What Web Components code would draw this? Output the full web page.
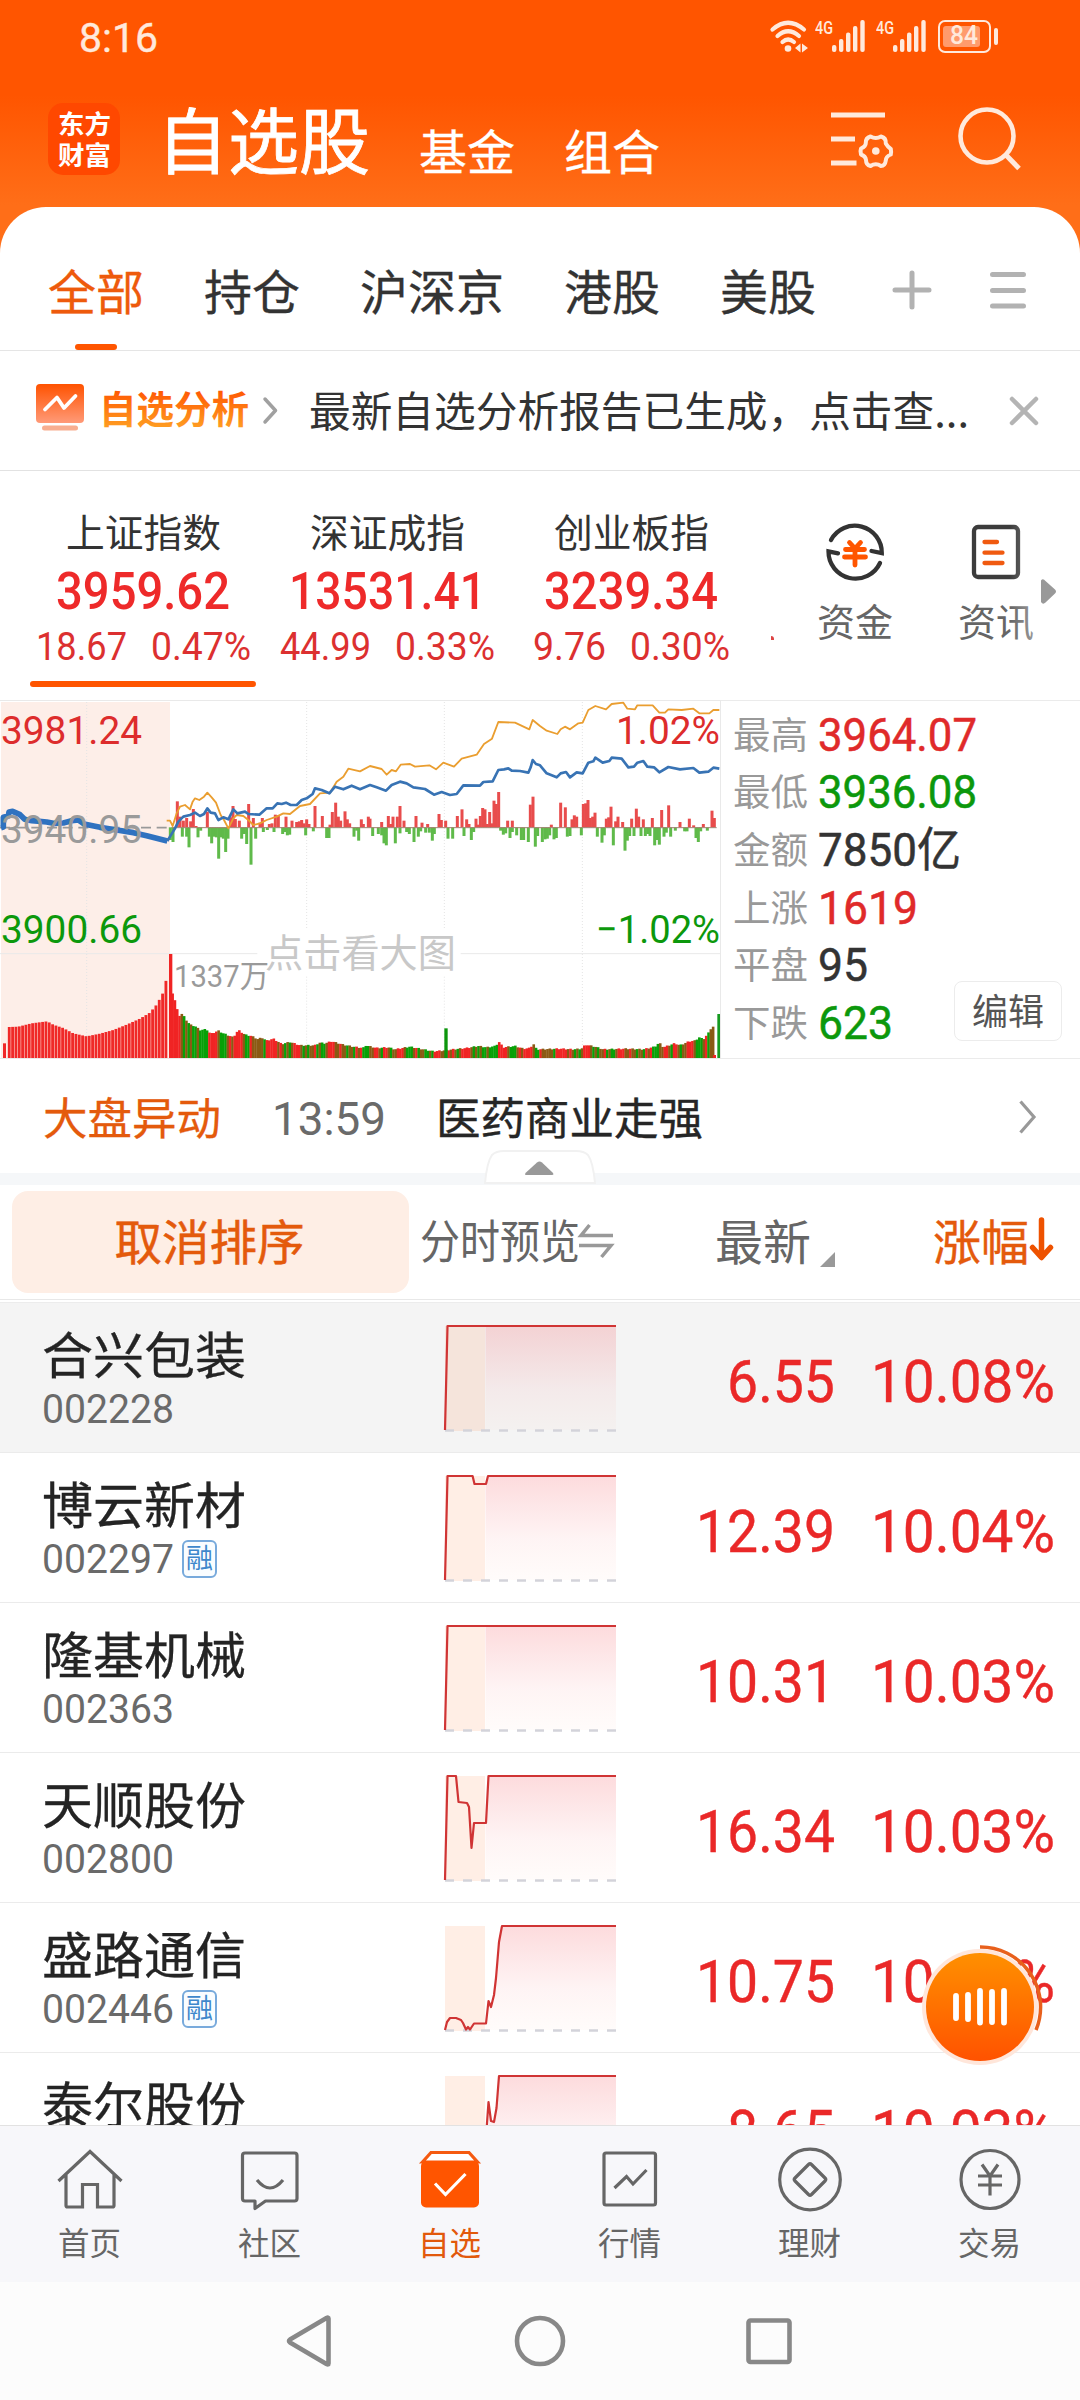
<!DOCTYPE html>
<html lang="zh-CN">
<head>
<meta charset="utf-8">
<title>自选股</title>
<style>
html,body{margin:0;padding:0}
body{width:1080px;height:2400px;overflow:hidden;background:#fff;font-family:"Noto Sans CJK SC",sans-serif;color:#333}
</style>
</head>
<body>
<watch-app></watch-app>
<script>
const define=(name,css,html,after)=>customElements.define(name,class extends HTMLElement{
  connectedCallback(){
    if(this.shadowRoot)return;
    const root=this.attachShadow({mode:'open'});
    const a=n=>this.getAttribute(n)||'';
    root.innerHTML=`<style>*{box-sizing:border-box}svg{display:block;overflow:visible}:host{display:block;box-sizing:border-box}${css}</style>${typeof html==='function'?html(a,this):html}`;
    if(after)after(this,root);
  }
});

/* One line of text set to an exact width: s = size, w = width, num = figures face */
define('fit-text',
 `:host{flex:none;white-space:nowrap;text-align:left}span{display:inline-block;transform-origin:0 50%;white-space:pre}`,
 `<span><slot></slot></span>`,
 (el,root)=>{
  const s=+el.getAttribute('s'),w=+el.getAttribute('w'),num=el.hasAttribute('num');
  const sp=root.querySelector('span');
  const lh=+el.getAttribute('lh')||Math.round(s*1.2);
  el.style.fontSize=s+'px';el.style.lineHeight=el.style.height=lh+'px';
  el.style.fontFamily=num?'Roboto,"Noto Sans CJK SC",sans-serif':'"Noto Sans CJK SC",sans-serif';
  if(el.hasAttribute('b'))el.style.fontWeight=el.getAttribute('b');
  if(el.hasAttribute('stroke'))el.style.webkitTextStroke=el.getAttribute('stroke')+'px currentColor';
  const k=w?w/sp.getBoundingClientRect().width:1;
  if(w)el.style.width=w+'px';
  sp.style.transform=`translateY(${num?0:-.056}em) scaleX(${k})`;
 });

define('signal-bars',`:host{width:51px;height:33px}div{display:flex;align-items:flex-start}svg{margin-left:-1px}`,
 `<div><fit-text num s="19" w="18" b="500" style="margin-top:-4px">4G</fit-text><svg width="34" height="33" fill="#ffe9dc"><rect x="0" y="25" width="4.4" height="7" rx="2"/><rect x="7" y="19" width="4.4" height="13" rx="2"/><rect x="14" y="12.500" width="4.400" height="19.500" rx="2"/><rect x="21" y="6" width="4.400" height="26" rx="2"/><rect x="28.300" y="0" width="4.400" height="32" rx="2"/></svg></div>`);

define('status-bar',
 `:host{height:74px;padding:20px 82px 0 79px;display:flex;justify-content:space-between;color:#ffe9dc}
 .r{display:flex;align-items:flex-start}.bat{width:53px;height:33px;border:2.5px solid #ffe9dc;border-radius:7px;margin-left:11px;padding:3.500px 3px;}
 .fill{width:37px;height:21px;background:#ff9b6d;border-radius:3px;display:flex;justify-content:center;align-items:center;padding-left:4px}
 .nub{width:4px;height:17px;border-radius:2px;background:#ffe9dc;margin:8px 0 0 3px}`,
 `<fit-text num s="41" w="79" stroke=".4" style="margin-top:-6px">8:16</fit-text>
 <div class="r"><svg width="39" height="33" fill="none" stroke="#ffe9dc" stroke-width="4.200" stroke-linecap="round"><path d="M2.500 9.500Q18 -4 34 9.500M7.500 16Q18 6.500 29 16M12.500 22Q18 17 24 22"/><circle cx="18" cy="28.500" r="3.300" fill="#ffe9dc" stroke="none"/><path d="M25 28l5.500-4.500v9zM32 32.500v-9l6 4.500z" fill="#ffe9dc" stroke="none"/></svg>
 <signal-bars style="margin-left:6px"></signal-bars><signal-bars style="margin-left:10px"></signal-bars>
 <div class="bat"><div class="fill"><fit-text num s="25" w="28" b="500">84</fit-text></div></div><div class="nub"></div></div>`);

define('app-header',
 `:host{height:133px;padding:0 0 0 48px;display:flex;align-items:flex-start;color:#fff}
 .logo{width:72px;height:72px;margin-top:29px;border-radius:15px;background:#ff4800;display:flex;flex-direction:column;align-items:center;justify-content:space-between;padding:7px 0 6px}
 .gap{flex:1}`,
 `<div class="logo"><fit-text s="26" lh="28" w="53" b="700">东方</fit-text><fit-text s="26" lh="28" w="53" b="700">财富</fit-text></div>
 <fit-text s="72" w="213" stroke=".8" style="margin:24px 0 0 37px">自选股</fit-text>
 <fit-text s="48" w="96" stroke=".3" style="margin:49px 0 0 49px">基金</fit-text>
 <fit-text s="48" w="96" stroke=".3" style="margin:49px 0 0 49px">组合</fit-text><div class="gap"></div>
 <svg width="60" height="62" viewBox="0 0 60 62" style="margin:38px 0 0 0" fill="none" stroke="#ffe9dc" stroke-width="5"><path d="M0 3h54M0 27h24M0 51h25.500"/><path stroke-width="4" stroke-linejoin="round" d="M39.500 24.500Q44.800 27.500 50 24.500Q55.200 25.800 54.800 31.500Q56.800 35 59.800 37Q60.500 40.500 59.800 42.500Q54.800 44.500 54.800 48.500Q54 54 50 54Q44.800 50.500 39.500 54Q35 53 35 48Q34.500 44 30 42.500Q29 39 30 36.500Q34.800 34.500 34.800 31Q34.500 26 39.500 24.500Z"/><circle cx="44.800" cy="39" r="3.800" fill="#ffe9dc" stroke="none"/></svg>
 <svg width="62" height="64" viewBox="0 0 62 64" style="margin:33px 60px 0 67px" fill="none" stroke="#ffe9dc" stroke-width="4.600"><circle cx="29" cy="29" r="26.500"/><path d="M47.500 47.500L61 61.500" stroke-width="5"/></svg>`);

define('group-tabs',
 `:host{height:144px;padding:0 54px 0 48px;display:flex;gap:60px;border-bottom:1px solid #e5e5e5;color:#333}
 .t{height:143px;display:flex;flex-direction:column;align-items:center;justify-content:space-between;padding-top:56px}
 .on{color:#ee5a0c}.on i{width:42px;height:6px;border-radius:3px;background:#ff5500;margin-left:0}
 .ic{margin-top:63px}`,
 `<div class="t on"><fit-text s="48" w="96" stroke=".3">全部</fit-text><i></i></div><div class="t"><fit-text s="48" w="96" stroke=".3">持仓</fit-text></div><div class="t"><fit-text s="48" w="144" stroke=".3">沪深京</fit-text></div><div class="t"><fit-text s="48" w="96" stroke=".3">港股</fit-text></div><div class="t"><fit-text s="48" w="96" stroke=".3">美股</fit-text></div>
 <svg class="ic" width="40" height="40" style="margin-left:16px" stroke="#b2b2b2" stroke-width="5" stroke-linecap="round"><path d="M20 3v34M3 20h34"/></svg>
 <svg class="ic" width="36" height="40" style="margin-left:-2px" stroke="#b2b2b2" stroke-width="5" stroke-linecap="round"><path d="M2.500 4.500h31M2.500 20.500h31M2.500 36h31"/></svg>`);

define('tip-bar',
 `:host{height:120px;border-bottom:1px solid #e2e2e2;display:flex;align-items:center;padding-left:36px}`,
 `<svg width="48" height="48" viewBox="0 0 48 48" style="margin-top:-5px"><defs><linearGradient id="a" x2="0" y2="1"><stop stop-color="#ff5200"/><stop offset="1" stop-color="#ff9a78"/></linearGradient></defs><rect width="48" height="39" rx="4" fill="url(#a)"/><path d="M9 25.500L21 13.500L28 24L39.500 12" fill="none" stroke="#fff" stroke-width="3.800" stroke-linecap="round" stroke-linejoin="round"/><rect x="6" y="41.500" width="36" height="5" rx="2.500" fill="#f8ae90"/></svg>
 <svg width="148" height="46" viewBox="0 0 148 46" style="margin:-4px 0 0 15px"><defs><linearGradient id="t" x2="0" y2="1"><stop offset=".15" stop-color="#ff5200"/><stop offset=".85" stop-color="#ff9a20"/></linearGradient></defs><text x="0" y="37" font-size="37.500" font-weight="700" fill="url(#t)" textLength="150">自选分析</text></svg>
 <svg width="15" height="27" viewBox="0 0 15 27" style="margin:0 0 0 16px" fill="none" stroke="#a0a0a0" stroke-width="3.500" stroke-linecap="round" stroke-linejoin="round"><path d="M2 2L12.500 13.500L2 25"/></svg>
 <fit-text s="42" w="660" style="margin-left:31px">最新自选分析报告已生成，点击查...</fit-text>
 <svg width="28" height="28" viewBox="0 0 28 28" style="margin-left:41px" stroke="#b4b4b4" stroke-width="4.500" stroke-linecap="round"><path d="M2 2l24 24M26 2L2 26"/></svg>`);

define('index-card',
 `:host{width:244px;height:229px;flex:none;display:flex;flex-direction:column;align-items:center;padding-top:38px;color:#dc3030}
 .n{color:#333}.v{color:#ee2a2a;margin-top:6px}.s{display:flex;gap:24px;margin-top:1px}i{width:226px;height:6px;border-radius:3px;margin-top:auto;margin-bottom:13px}:host([on]) i{background:#ff5500}`,
 a=>`<fit-text class="n" s="38.500" w="155">${a('name')}</fit-text><fit-text class="v" num b="500" s="52" w="${a('vw')}">${a('value')}</fit-text><div class="s"><fit-text num s="38" w="${a('dw')}">${a('diff')}</fit-text><fit-text num s="38" w="100">${a('pct')}</fit-text></div><i></i>`);

define('quick-link',
 `:host{width:141px;flex:none;display:flex;flex-direction:column;align-items:center;padding-top:49px;color:#666}fit-text{margin-top:15px}`,
 a=>`<slot></slot><fit-text s="38" w="76">${a('label')}</fit-text>`);

define('index-strip',
 `:host{height:229px;display:flex;position:relative;padding-left:21px}
 .dot{width:3px;height:4px;background:#d44;border-radius:0 3px 0 0;margin:165px 0 0 18px}.q{display:flex;margin-left:10px}.fade{position:absolute;right:30px;top:40px;width:40px;height:140px;background:linear-gradient(90deg,#fff0,#ffffff90)}
 .tri{position:absolute;left:1041px;top:108px}`,
 `<index-card on name="上证指数" value="3959.62" vw="174" diff="18.67" dw="91" pct="0.47%"></index-card>
 <index-card name="深证成指" value="13531.41" vw="197" diff="44.99" dw="91" pct="0.33%"></index-card>
 <index-card name="创业板指" value="3239.34" vw="174" diff="9.76" dw="73" pct="0.30%"></index-card><div class="dot"></div>
 <div class="q"><quick-link label="资金"><svg width="64" height="64" fill="none" stroke-width="4.300" stroke-linecap="round" stroke-linejoin="miter"><path stroke="#333" d="M8 20A27 27 0 0 1 58.800 33.200L48.500 31M57 43A27 27 0 0 1 5.500 31.300L15 33.300"/><path stroke="#ff5500" stroke-width="4.800" d="M26.500 22.500L32 28.500L37.500 22.500M22.500 29.500H41.500M21.500 37H42.500M32 29V45"/></svg></quick-link>
 <quick-link label="资讯"><svg width="64" height="64" fill="none" stroke-width="4.300" stroke-linecap="round"><rect x="10" y="7" width="44" height="50" rx="4" stroke="#3c3c3c"/><path stroke="#f05a10" d="M20.500 22H33M20.500 32.700H38.500M20.500 43H38.500"/></svg></quick-link></div>
 <div class="fade"></div><svg class="tri" width="16" height="25"><path d="M0 1.500Q2 -1 4.500 2L14 10.500Q16 12.500 14 14.500L4.500 23.500Q2 26 0 23Z" fill="#999"/></svg>`);

/* Chart geometry is kept in thirds of a pixel; the zero line sits at 412, volume base at 1104 */
const AVG='500,392 510,392 518,408 530,370 540,350 555,345 570,358 578,335 585,325 598,330 612,320 622,308 635,322 648,338 662,375 672,390 685,415 700,385 710,375 730,378 745,390 760,405 780,400 800,390 830,380 850,370 870,372 900,348 930,342 960,310 990,308 1010,275 1030,260 1045,236 1080,244 1110,228 1145,237 1160,254 1175,240 1188,244 1202,224 1230,222 1245,230 1288,226 1308,238 1330,218 1362,230 1385,206 1430,194 1452,162 1476,146 1495,96 1545,98 1588,118 1598,90 1620,108 1640,122 1672,132 1682,118 1695,110 1710,118 1735,100 1748,98 1765,60 1786,48 1818,58 1835,42 1870,38 1882,56 1905,58 1912,46 1958,46 1978,68 1995,68 2005,58 2045,60 2080,56 2098,70 2128,70 2140,60 2158,60';
const IDX='502,453 510,440 525,415 535,395 550,380 570,375 585,368 600,378 612,372 622,355 632,368 645,370 655,390 670,382 685,388 700,358 712,370 735,365 745,372 778,374 800,355 818,355 832,340 845,342 858,338 872,345 890,345 905,330 920,325 938,312 945,295 965,300 988,310 1005,290 1030,298 1055,287 1080,298 1110,285 1130,292 1158,302 1175,285 1200,275 1220,280 1240,292 1275,297 1302,314 1325,306 1350,315 1370,312 1390,286 1440,287 1450,276 1478,274 1495,240 1512,238 1525,235 1535,242 1560,243 1585,248 1592,232 1598,210 1608,222 1620,226 1640,250 1670,262 1682,250 1698,246 1710,262 1730,247 1748,250 1765,218 1780,214 1786,203 1808,218 1828,213 1835,203 1865,206 1885,232 1902,230 1912,218 1930,213 1942,230 1962,232 1978,247 2005,231 2040,238 2080,234 2098,248 2125,245 2140,233 2158,236';
const UP='532:78,540:32,550:20,560:28,572:18,580:55,588:4,622:47,692:30,699:64,706:25,718:20,746:70,760:28,780:14,787:28,808:10,816:12,826:38,835:36,858:32,876:20,890:16,898:18,905:22,912:12,920:24,927:10,945:64,967:34,990:8,997:46,1007:74,1015:32,1022:20,1035:48,1042:24,1049:12,1084:24,1090:10,1105:32,1110:26,1145:16,1165:34,1172:10,1179:32,1192:32,1200:64,1212:20,1248:34,1266:14,1283:10,1317:40,1324:22,1337:20,1372:34,1386:54,1400:24,1407:10,1428:26,1435:8,1441:34,1448:58,1455:54,1462:10,1469:46,1475:12,1482:80,1489:70,1496:106,1523:20,1537:20,1591:68,1599:92,1654:8,1682:74,1696:60,1716:24,1723:36,1730:32,1750:70,1757:72,1764:82,1771:28,1778:32,1785:44,1819:26,1826:30,1833:62,1847:18,1854:32,1868:16,1895:26,1909:56,1916:32,1930:24,1957:28,1985:52,2006:66,2040:16,2068:26,2081:6,2110:10,2136:50,2143:28';
const DOWN='511:38,519:44,547:28,560:28,567:60,594:30,602:10,628:28,635:48,642:28,656:94,649:30,663:30,670:34,677:74,684:34,725:34,733:20,740:50,753:112,767:34,790:14,802:8,822:14,848:20,855:14,862:24,869:22,917:24,940:12,980:32,987:32,1062:28,1070:10,1076:40,1118:26,1135:20,1145:24,1152:48,1159:54,1186:48,1200:18,1220:14,1228:20,1242:44,1255:28,1262:12,1277:16,1288:16,1297:40,1303:20,1344:34,1358:34,1392:26,1414:38,1421:14,1502:10,1510:22,1517:18,1530:32,1537:14,1550:24,1564:38,1571:38,1585:44,1606:58,1613:26,1627:44,1635:36,1642:34,1649:24,1662:36,1669:32,1702:28,1710:26,1744:24,1792:28,1806:46,1813:24,1840:54,1875:70,1882:40,1889:26,1902:26,1923:26,1936:26,1943:20,1950:26,1964:54,1971:38,1978:52,1992:28,1999:16,2012:28,2026:10,2054:12,2061:12,2088:32,2095:44,2102:12,2122:10';
const PRE=[[28,93],[55,94],[95,104],[142,110],[160,100],[190,90],[220,74],[260,65],[300,73],[340,84],[380,100],[420,118],[450,136],[470,160],[480,178],[490,197],[500,240]];
const VOL=[[518,195],[526,170],[533,140],[540,125],[547,134],[556,118],[570,100],[585,96],[600,84],[620,86],[632,72],[655,82],[670,74],[700,62],[715,84],[735,70],[755,66],[775,56],[785,62],[800,52],[820,58],[845,42],[870,48],[900,38],[945,38],[958,46],[975,44],[995,50],[1030,40],[1060,34],[1090,30],[1096,38],[1130,30],[1165,32],[1185,26],[1230,34],[1300,20],[1325,22],[1360,26],[1400,30],[1435,36],[1460,32],[1488,36],[1496,50],[1510,32],[1545,36],[1570,28],[1592,30],[1599,45],[1610,26],[1680,28],[1720,26],[1745,28],[1757,40],[1785,34],[1810,26],[1880,28],[1930,26],[1965,34],[1978,46],[1990,32],[2025,44],[2040,38],[2068,50],[2085,52],[2098,62],[2110,56],[2125,74],[2136,94]];
const at=(t,x)=>{let i=1;while(i<t.length-1&&t[i][0]<x)i++;const[p,q]=t[i-1],[r,s]=t[i];return q+(s-q)*Math.max(0,Math.min(1,(x-p)/(r-p)))};
const bars=(list,f)=>list.split(',').map(b=>{const[x,h]=b.split(':').map(Number);return `<rect x="${x-4.500}" y="${f<0?412:412-h}" width="9" height="${h}"/>`}).join('');
const TONE='rrrrbgbgbggbggggrrrrbgggbrbrrrrbggrbbbbbgrrrrrbrbgbgbrrrbgbgbbrgbggbrrrbbrbbgbbgrbrgggbbrrbgrrbgbbrrrbgggbrgbbggbgrrrbbgrbrbgb';

define('market-chart',
 `:host{width:721px;height:359px;position:relative;flex:none;border-right:1px solid #e9e9e9}
 fit-text{position:absolute}.r{color:#dd2c2c}.g{color:#0c980c}.y{color:#9a9a9a}`,
 ()=>{
  let pre='',vol='';
  for(let x=28;x<=503;x+=10)pre+=`<rect x="${x-4.500}" y="${1104-at(PRE,x)}" width="8.500" height="${at(PRE,x)}"/>`;
  let i=0;for(let x=518;x<2142;x+=6.900,i++){const h=at(VOL,x)+((i*7)%3-1)*1.500;const t=x<537?'r':TONE[i%TONE.length];vol+=`<rect x="${x-4}" y="${1104-h}" width="7.800" height="${h}" fill="${t=='r'?'#f02424':t=='g'?'#08a008':'#8a5a14'}"/>`;}
  return `<svg width="720" height="359" viewBox="0 30 2160 1077">
  <rect x="3" y="36" width="507" height="1068" fill="#fdeee8"/>
  <g stroke="#e4e4e4" stroke-width="3"><path d="M0 31.500H2160M0 791H772M1382 791H2160M0 1105.500H2160" stroke="#e9e9e9"/><path d="M260 36V1104M920 36V715M920 860V1104M1333 36V715M1333 860V1104M1747 36V1104" stroke-dasharray="3 6"/></g>
  <g fill="#f02828">${pre}<rect x="9" y="1060" width="9" height="44"/></g>${vol}
  <rect x="507" y="792" width="10" height="312" fill="#f02424"/><rect x="1333" y="1015" width="10" height="89" fill="#0c960c"/><rect x="2139" y="1095" width="9" height="9" fill="#f02424"/><rect x="2152" y="972" width="8" height="132" fill="#169a20"/>
  <path d="M0 413H510" stroke="#999" stroke-width="5" stroke-dasharray="30 17"/>
  <g fill="#e84c4c">${bars(UP,1)}</g><g fill="#5fba4a">${bars(DOWN,-1)}</g><path d="M515 413H2150" stroke="#a08070" stroke-width="3"/>
  <polyline points="${AVG}" fill="none" stroke="#ea9e30" stroke-width="5.500" stroke-linejoin="round"/>
  <polyline points="3,413 10,411 10,382 25,378 27,366 38,364 60,374 74,388 95,392 140,396 160,400 190,399 215,392 235,390 252,402 300,412 350,420 400,428 440,437 502,453" fill="none" stroke="#2f72c0" stroke-width="17" stroke-linejoin="round"/>
  <polyline points="${IDX}" fill="none" stroke="#3873b4" stroke-width="8" stroke-linejoin="round"/></svg>
  <fit-text num class="r" s="39.500" w="141" style="left:1px;top:6.500px">3981.24</fit-text>
  <fit-text num class="y" s="39.500" w="141" style="left:1px;top:105.500px">3940.95</fit-text>
  <fit-text num class="g" s="39.500" w="141" style="left:1px;top:205.500px">3900.66</fit-text>
  <fit-text num class="r" s="39.500" w="104" style="left:616px;top:6.500px">1.02%</fit-text>
  <fit-text num class="g" s="39.500" w="124" style="left:596px;top:205.500px">−1.02%</fit-text>
  <fit-text s="38.500" w="191" style="left:265px;top:229px;color:#c8c8c8">点击看大图</fit-text>
  <fit-text num class="y" s="31" w="95" style="left:174px;top:258px">1337万</fit-text>`});

define('stat-line',`:host{display:flex;align-items:center;height:57.600px;gap:10px;color:#999}.v{color:#333}:host([up]) .v{color:#e02a2a}:host([down]) .v{color:#0c980c}`,
 a=>`<fit-text s="37" w="75">${a('k')}</fit-text><fit-text class="v" num stroke=".5" s="46.500" w="${a('w')}">${a('v')}</fit-text>`);

define('market-panel',
 `:host{display:flex;height:359px}.side{flex:1;position:relative;border-top:1px solid #ebebeb;border-bottom:1px solid #ebebeb;padding:5px 0 0 12px}
 .edit{position:absolute;left:233px;top:280px;width:108px;height:60px;border:1.500px solid #ececec;border-radius:8px;background:#fff;color:#555;display:flex;align-items:center;justify-content:center}`,
 `<market-chart></market-chart><div class="side"><stat-line up k="最高" v="3964.07" w="159"></stat-line><stat-line down k="最低" v="3936.08" w="159"></stat-line><stat-line k="金额" v="7850亿" w="143"></stat-line><stat-line up k="上涨" v="1619" w="100"></stat-line><stat-line k="平盘" v="95" w="50"></stat-line><stat-line down k="下跌" v="623" w="75"></stat-line><div class="edit"><fit-text s="36" w="72">编辑</fit-text></div></div>`);

define('news-line',
 `:host{height:126px;border-bottom:12px solid #f5f7f9;display:flex;align-items:center;padding:2px 44px 0 43px;position:relative}
 .tab{position:absolute;left:484px;top:91px}.c{margin-left:auto}`,
 `<fit-text s="44.500" w="178" stroke=".3" style="color:#e45a0c">大盘异动</fit-text><fit-text num s="47" w="114" style="color:#6a6a6a;margin:3px 0 0 51px">13:59</fit-text><fit-text s="44.500" w="267" stroke=".4" style="color:#262626;margin-left:50px">医药商业走强</fit-text>
 <svg class="c" width="17" height="34" fill="none" stroke="#999" stroke-width="3.200"><path d="M1.500 1.500L15 17L1.500 32.500"/></svg>
 <svg class="tab" width="112" height="34"><path d="M1 33Q3 12 8 5Q12 1 20 1H92Q100 1 104 5Q109 12 111 33Z" fill="#fff" stroke="#f1f1f1" stroke-width="2"/><path d="M42 25Q40 25 42 22.500L53 12.500Q55.500 10.500 58 12.500L68.500 22.500Q70.500 25 68 25Z" fill="#999"/></svg>`);

define('sort-head',
 `:host{height:118px;display:flex;align-items:flex-start;padding:6px 0 0 12px;border-bottom:1px solid #ececec;color:#666;position:relative}
 .cancel{width:397px;height:102px;border-radius:16px;background:#feeee5;color:#e45a0c;display:flex;align-items:center;justify-content:center;padding-right:2px}
 .h{margin-top:22px}.line{position:absolute;left:0;right:0;top:114px;height:1px;background:#e8e8e8}.o{color:#e45a0c}`,
 `<div class="cancel"><fit-text s="47.500" w="190" stroke=".5">取消排序</fit-text></div>
 <fit-text class="h" s="46" w="160" style="margin:23px 0 0 11px">分时预览</fit-text>
 <svg width="36" height="36" style="margin:32px 0 0 -1px" fill="none" stroke="#999" stroke-width="3.500"><path d="M10.500 2L2 12.500H34M0 22.500H32L22.500 34"/></svg>
 <fit-text class="h" s="48" w="96" style="margin-left:100px">最新</fit-text>
 <svg width="16" height="16" style="margin:61px 0 0 9px"><path d="M15 0V15H0Z" fill="#999"/></svg>
 <fit-text class="h o" s="48" w="96" stroke=".4" style="margin-left:97px">涨幅</fit-text>
 <svg width="24" height="44" style="margin:28px 0 0 0" fill="none" stroke="#ee5200" stroke-width="5.500"><path d="M12.500 1V37M3.500 28.500L12.500 38.500L21.500 28.500" stroke-linecap="round" stroke-linejoin="round"/></svg><div class="line"></div>`);

define('spark-line',`:host{width:172px;height:108px;flex:none}`,
 a=>`<svg width="172" height="108" viewBox="0 0 172 108"><defs><linearGradient id="f" x2="0" y2="1"><stop stop-color="#f01e28" stop-opacity=".16"/><stop offset=".6" stop-color="#f01e28" stop-opacity=".05"/><stop offset="1" stop-color="#ff5522" stop-opacity=".02"/></linearGradient><clipPath id="c"><path d="M41.500 0H172V106H41.500Z"/></clipPath></defs>
 <rect x="1" y="1" width="40" height="105" fill="#ff5500" fill-opacity=".1"/><polygon points="${a('pts')} 172,105 0,105" fill="url(#f)" clip-path="url(#c)"/><path d="M1 105.500H172" stroke="#d3d3da" stroke-width="2.500" stroke-dasharray="9 9"/><polyline points="${a('pts')}" fill="none" stroke="#d03434" stroke-width="2.200" stroke-linejoin="round"/></svg>`);

define('stock-row',
 `:host{height:150px;display:flex;border-bottom:1px solid #ebebeb;padding:0 25px 0 42px;color:#ea2828}:host([sel]){background:#f4f4f4}
 .l{width:402px;padding-top:22px;color:#242424}.c{display:flex;align-items:center;gap:8px;color:#6a6a6a;height:48px;margin-top:1px}
 .tag{width:35px;height:38px;border:2px solid #78aadc;border-radius:6px;color:#3f88cc;display:flex;align-items:center;justify-content:center;background:#fafdff;margin-top:-2px}
 .v{margin:43px 0 0;display:flex;flex:1;justify-content:flex-end}`,
 a=>`<div class="l"><fit-text s="50" w="204" stroke=".3">${a('name')}</fit-text><div class="c"><fit-text num s="40" w="132">${a('code')}</fit-text>${a('tag')?`<div class="tag"><fit-text s="27" w="27">${a('tag')}</fit-text></div>`:''}</div></div>
 <spark-line style="margin-top:21.500px" pts="${a('pts')}"></spark-line><div class="v"><fit-text num s="60" w="${a('w')}" stroke=".4">${a('price')}</fit-text><fit-text num s="60" w="184" stroke=".4" style="margin-left:36px">${a('pct')}</fit-text></div>`);

define('stock-list',`:host{height:822px;overflow:hidden;background:#fff}`,
 `<stock-row sel name="合兴包装" code="002228" price="6.55" w="108" pct="10.08%" pts="1,105 3.5,1 172,1"></stock-row>
 <stock-row name="博云新材" code="002297" tag="融" price="12.39" w="139" pct="10.04%" pts="1,105 3.5,1 28.6,1 30.5,9 42,9 44,1 172,1"></stock-row>
 <stock-row name="隆基机械" code="002363" price="10.31" w="139" pct="10.03%" pts="1,105 3.5,1 172,1"></stock-row>
 <stock-row name="天顺股份" code="002800" price="16.34" w="139" pct="10.03%" pts="1,105 3.5,1 12,1 14.5,27 23,28 25,32 27.5,73 30,48 42,48 44.5,1 172,1"></stock-row>
 <stock-row name="盛路通信" code="002446" tag="融" price="10.75" w="139" pct="10.03%" pts="1,105 3,97 6,93 12,93 17,95 19,98 22,104.5 24,102 26,104.5 30,98.5 42,98.5 44.5,76 47,82 50,70 52,53 55,17 58,1 172,1"></stock-row>
 <stock-row name="泰尔股份" code="002347" price="8.65" w="108" pct="10.03%" pts="42,105 42.5,55 44.5,27 47,46 50,47 52.5,33 55,1 172,1"></stock-row>`);

define('tab-item',`:host{width:180px;display:flex;flex-direction:column;align-items:center;padding:20px 1px 0 0;color:#666}:host([on]){color:#e2590c}fit-text{margin-top:14px}`,
 a=>`<slot></slot><fit-text s="31.500" w="63">${a('label')}</fit-text>`);

define('tab-bar',`:host{height:157px;background:#f7f7fa;border-top:1px solid #e2e2e2;display:flex}svg{fill:none;stroke:#666;stroke-width:3.200}`,
 `<tab-item label="首页"><svg width="64" height="64"><path d="M.500 35L32 5.500L63.500 35M8 29V59.500Q8 61 9.500 61H24.500V38.500H39.500V61H54.500Q56 61 56 59.500V29"/></svg></tab-item>
 <tab-item label="社区"><svg width="64" height="64" stroke-linejoin="round"><path d="M7 7H56.500Q59 7 59 9.500V52.500Q59 55 56.500 55H27.500L17 62.500V55H7Q4.500 55 4.500 52.500V9.500Q4.500 7 7 7Z"/><path d="M19 34Q32 50 45 34"/></svg></tab-item>
 <tab-item on label="自选"><svg width="64" height="64"><path d="M4.500 16L13 6.500H51L59.500 16Z" style="fill:#fff;stroke:#f55a10"/><rect x="3" y="15" width="58" height="46.500" rx="5" style="fill:#ff5500;stroke:none"/><path d="M17 37.500L27.500 48.500L47.500 28" style="stroke:#fff"/></svg></tab-item>
 <tab-item label="行情"><svg width="64" height="64"><rect x="6" y="7" width="51.500" height="52" rx="2"/><path d="M16.500 42L28.500 30.500L35 38L48.500 24"/></svg></tab-item>
 <tab-item label="理财"><svg width="64" height="64"><circle cx="32" cy="33.500" r="30.300"/><path stroke-linejoin="round" d="M30.500 18.500Q32 17 33.500 18.500L47 32Q48.500 33.500 47 35L33.500 48.500Q32 50 30.500 48.500L17 35Q15.500 33.500 17 32Z"/></svg></tab-item>
 <tab-item label="交易"><svg width="64" height="64"><circle cx="32" cy="33.500" r="29"/><path d="M24 18.500L32 30L40 18.500M20 30H44M20 39H44M32 29V49.500"/></svg></tab-item>`);

define('nav-keys',`:host{height:118px;background:#fcfcfc;display:flex;justify-content:center;gap:180px;padding:34px 0 0;}svg{fill:none;stroke:#888;stroke-width:4.600;stroke-linejoin:round}`,
 `<svg width="50" height="50"><path d="M43.500 2.500V47.500Q43.500 49 41.500 48L5 26.500Q3 25 5 23.500L41.500 2Q43.500 1 43.500 2.500Z"/></svg><svg width="50" height="50"><circle cx="25" cy="25" r="23"/></svg><svg width="50" height="50"><rect x="3.500" y="4.500" width="41" height="41.500" rx="2"/></svg>`);

define('float-player',`:host{position:absolute;left:918px;top:1945px}`,
 `<svg width="126" height="126" viewBox="918 1945 126 126"><defs><linearGradient id="o" x2="0" y2="1"><stop stop-color="#ff9000"/><stop offset="1" stop-color="#ff5200"/></linearGradient></defs><circle cx="980" cy="2007" r="58" fill="#ffe6da"/><circle cx="980" cy="2007" r="54" fill="url(#o)"/><path d="M980 1947A60 60 0 0 1 1036 2030" fill="none" stroke="#e8601c" stroke-width="3.500"/><path d="M956 1996V2018M968 1995V2019M980 1991V2022.500M992 1992V2022M1004 1991V2022.500" stroke="#fff" stroke-width="5.800" stroke-linecap="round"/></svg>`);

define('watch-app',
 `:host{width:1080px;height:2400px;position:relative;overflow:hidden;background:linear-gradient(#ff5500 0,#ff5500 95px,#ff6e18 205px,#ff6e18 260px)}main{background:#fff;border-radius:46px 46px 0 0}`,
 `<status-bar></status-bar><app-header></app-header><main><group-tabs></group-tabs><tip-bar></tip-bar><index-strip></index-strip><market-panel></market-panel><news-line></news-line><sort-head></sort-head><stock-list></stock-list><tab-bar></tab-bar><nav-keys></nav-keys></main><float-player></float-player>`);
</script>
</body>
</html>
